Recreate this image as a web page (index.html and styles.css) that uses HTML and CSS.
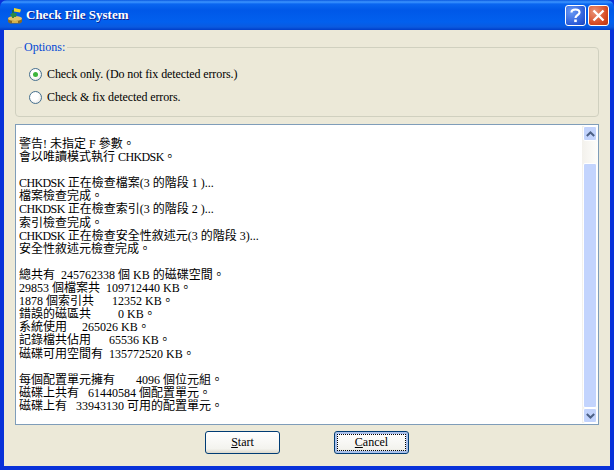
FILE: index.html
```html
<!DOCTYPE html>
<html lang="zh-Hant">
<head>
<meta charset="utf-8">
<title>Check File System</title>
<link rel="stylesheet" href="styles.css">
</head>
<body>
<div class="window">
  <header class="titlebar">
    <svg class="app-icon" width="16" height="18" viewBox="0 0 16 18">
      <path d="M1 12.500h14v3.500l-2 1.500H3l-2-1.500z" fill="#8a6a24"/>
      <ellipse cx="8" cy="12.500" rx="7" ry="2.500" fill="#e3c468"/>
      <path d="M5 15h6v2H5z" fill="#d8b24a"/>
      <path d="M6 12V4" stroke="#1f6a34" stroke-width="1.600"/>
      <path d="M3 8.500l3-2 4 1-1 3.500H5z" fill="#2c8a48"/>
      <path d="M7 2l7 1.500-1 3-6-1z" fill="#f2d62c"/>
    </svg>
    <span class="title">Check File System</span>
    <div class="controls">
      <button class="cap cap-help" aria-label="Help">
        <svg width="13" height="15" viewBox="0 0 13 15"><path d="M2.500 4.500C2.500 2.500 4.500 1.500 6.500 1.500S10.500 2.500 10.500 4.500C10.500 7 6.500 7 6.500 10" fill="none" stroke="#fff" stroke-width="2.200"/><rect x="5.200" y="11.500" width="2.600" height="2.600" fill="#fff"/></svg>
      </button>
      <button class="cap cap-close" aria-label="Close">
        <svg width="13" height="13" viewBox="0 0 13 13"><path d="M1.500 1.500L11.500 11.500M11.500 1.500L1.500 11.500" stroke="#fff" stroke-width="2.400"/></svg>
      </button>
    </div>
  </header>
  <main class="client">
    <fieldset class="options">
      <legend class="legend">Options:</legend>
      <div class="radio-list">
        <label class="radio-row"><span class="radio radio-on"></span><span class="radio-text">Check only. (Do not fix detected errors.)</span></label>
        <label class="radio-row"><span class="radio"></span><span class="radio-text">Check &amp; fix detected errors.</span></label>
      </div>
    </fieldset>
    <section class="output">
      <div class="log">
        <div class="line">警告! 未指定 F 參數。</div>
        <div class="line">會以唯讀模式執行 <span class="caps">CHKDSK</span>。</div>
        <div class="line"></div>
        <div class="line"><span class="caps">CHKDSK</span> 正在檢查檔案(3 的階段 1 )...</div>
        <div class="line">檔案檢查完成。</div>
        <div class="line"><span class="caps">CHKDSK</span> 正在檢查索引(3 的階段 2 )...</div>
        <div class="line">索引檢查完成。</div>
        <div class="line"><span class="caps">CHKDSK</span> 正在檢查安全性敘述元(3 的階段 3)...</div>
        <div class="line">安全性敘述元檢查完成。</div>
        <div class="line"></div>
        <div class="line">總共有  245762338 個 KB 的磁碟空間。</div>
        <div class="line">29853 個檔案共  109712440 KB。</div>
        <div class="line">1878 個索引共      12352 KB。</div>
        <div class="line">錯誤的磁區共         0 KB。</div>
        <div class="line">系統使用     265026 KB。</div>
        <div class="line">記錄檔共佔用      65536 KB。</div>
        <div class="line">磁碟可用空間有  135772520 KB。</div>
        <div class="line"></div>
        <div class="line">每個配置單元擁有       4096 個位元組。</div>
        <div class="line">磁碟上共有   61440584 個配置單元。</div>
        <div class="line">磁碟上有   33943130 可用的配置單元。</div>
      </div>
      <div class="scrollbar">
        <div class="sb-btn"><svg width="9" height="6" viewBox="0 0 9 6"><path d="M.8 5L4.500 1.500 8.200 5" fill="none" stroke="#4d6185" stroke-width="2"/></svg></div>
        <div class="sb-track"><div class="sb-thumb"></div></div>
        <div class="sb-btn"><svg width="9" height="6" viewBox="0 0 9 6"><path d="M.8 1L4.500 4.500 8.200 1" fill="none" stroke="#4d6185" stroke-width="2"/></svg></div>
      </div>
    </section>
    <div class="actions">
      <button class="btn"><u>S</u>tart</button>
      <button class="btn btn-default"><span class="focus"><u>C</u>ancel</span></button>
    </div>
  </main>
</div>
</body>
</html>
```
FILE: styles.css
```css
* { box-sizing: border-box; }
html, body { margin: 0; padding: 0; }
body {
  width: 614px;
  height: 470px;
  overflow: hidden;
  background: #0831d9;
  font-family: "Liberation Serif", "Noto Sans CJK TC", serif;
  font-size: 12px;
  color: #000;
}
.window {
  width: 614px;
  height: 470px;
  display: flex;
  flex-direction: column;
  border-radius: 7px 7px 0 0;
  overflow: hidden;
  background: #0831d9;
}
.titlebar {
  flex: 0 0 30px;
  display: flex;
  align-items: center;
  padding: 0 5px 0 7px;
  background: linear-gradient(to bottom, #0a58e0 0, #3d95ff 2px, #0a66f0 4px, #0058e8 10px, #0260ee 22px, #0a5ae0 27px, #003dc8 30px);
}
.app-icon { margin-right: 3px; flex: none; }
.title {
  color: #fff;
  font-weight: bold;
  font-size: 13px;
  text-shadow: 1px 1px 0 #0f1f8a;
}
.controls { margin-left: auto; display: flex; gap: 2px; }
.cap {
  width: 21px;
  height: 21px;
  padding: 0;
  border: 1px solid #fff;
  border-radius: 3px;
  display: flex;
  align-items: center;
  justify-content: center;
}
.cap-help { background: radial-gradient(circle at 30% 30%, #6a9af5, #2a5bd8 70%, #1d44b8); }
.cap-close { background: radial-gradient(circle at 30% 30%, #ea9478, #d64a22 65%, #b8340f); }
.client {
  flex: 1;
  margin: 0 4px 4px 4px;
  background: #ece9d8;
  padding: 10px 11px 0 11px;
  display: flex;
  flex-direction: column;
  min-height: 0;
}
.options {
  margin: 0;
  height: 77px;
  flex: none;
  border: 1px solid #d0d0bf;
  border-radius: 4px;
  padding: 0;
}
.legend {
  color: #0046d5;
  padding: 1px 2px 0;
  margin-left: 6px;
  line-height: 13px;
}
.radio-list {
  padding: 12px 0 0 13px;
  display: flex;
  flex-direction: column;
  gap: 7px;
}
.radio-row { display: flex; align-items: center; gap: 5px; height: 16px; }
.radio-text { letter-spacing: -0.1px; }
.radio {
  width: 13px;
  height: 13px;
  border-radius: 50%;
  border: 1px solid #46708f;
  background: radial-gradient(circle at 40% 40%, #fff 40%, #dcdcd6);
  flex: none;
  display: flex;
  align-items: center;
  justify-content: center;
}
.radio-on::after {
  content: "";
  width: 5px;
  height: 5px;
  border-radius: 50%;
  background: #3cb43c;
}
.output {
  margin-top: 7px;
  height: 301px;
  flex: none;
  border: 1px solid #7f9db9;
  background: #fff;
  display: flex;
}
.log {
  flex: 1;
  padding: 13px 0 0 3px;
  overflow: hidden;
}
.line {
  height: 13.1px;
  line-height: 13.1px;
  white-space: pre;
}
.caps { letter-spacing: -0.6px; }
.scrollbar {
  width: 16px;
  margin: 1px 0;
  display: flex;
  flex-direction: column;
  background: linear-gradient(to right, #f3f1ec, #fefefb);
}
.sb-btn {
  flex: 0 0 15px;
  margin: 0 1px;
  border: 1px solid #fff;
  border-radius: 2px;
  background: #c2d3fc;
  display: flex;
  align-items: center;
  justify-content: center;
}
.sb-track { flex: 1; padding: 22px 0 0; display: flex; }
.sb-thumb {
  flex: 1;
  margin: 0 1px;
  border: 1px solid #fff;
  border-radius: 2px;
  background: #c3d4fd;
}
.actions { display: flex; justify-content: center; gap: 54px; margin-top: 6px; }
.btn {
  width: 75px;
  height: 23px;
  padding: 0;
  font: inherit;
  color: #000;
  border: 1px solid #003c74;
  border-radius: 3px;
  background: linear-gradient(to bottom, #fff, #f3f3ee 80%, #dcd8cc);
}
.btn-default {
  box-shadow: inset 0 0 0 2px #a9c0eb;
}
.focus {
  display: block;
  margin: 2px;
  height: 17px;
  line-height: 15px;
  border: 1px dotted #000;
}
```
